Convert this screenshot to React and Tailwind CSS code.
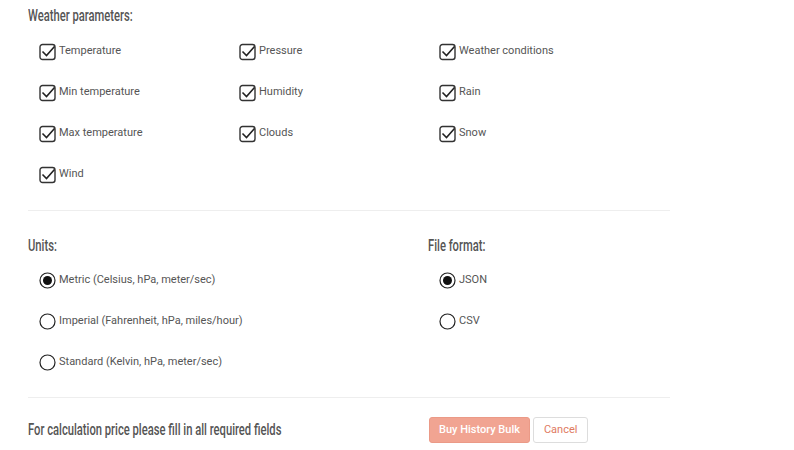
import React from "react";

const params = [
  ["Temperature", "Pressure", "Weather conditions"],
  ["Min temperature", "Humidity", "Rain"],
  ["Max temperature", "Clouds", "Snow"],
  ["Wind"],
];

function Heading({ children, className = "" }) {
  return (
    <div className={`h-[16px] leading-none whitespace-nowrap ${className}`}>
      <span className="inline-block origin-left scale-x-[0.7] text-[16px] font-medium text-[#555] leading-none">
        {children}
      </span>
    </div>
  );
}

function CheckIcon() {
  return (
    <svg width="18" height="18" viewBox="0 0 18 18" className="shrink-0">
      <rect x="1" y="1.5" width="15" height="15" rx="2.5" fill="white" stroke="#333" strokeWidth="1.4" />
      <path d="M3.5 8.5 L7.5 12.5 L15.5 3.5" fill="none" stroke="#222" strokeWidth="1.6" />
    </svg>
  );
}

function Radio({ checked }) {
  return (
    <svg width="17" height="17" viewBox="0 0 17 17" className="shrink-0">
      <circle cx="8.5" cy="8.5" r="7.5" fill="white" stroke="#222" strokeWidth="1.2" />
      {checked && <circle cx="8.5" cy="8.5" r="4.5" fill="#111" />}
    </svg>
  );
}

function Check({ label }) {
  return (
    <label className="flex items-center gap-[2px] w-[200px] h-[41px] text-[11px] text-[#555]">
      <CheckIcon />
      {label}
    </label>
  );
}

function RadioRow({ label, checked }) {
  return (
    <label className="flex items-center gap-[3px] h-[41px] text-[11px] text-[#555]">
      <Radio checked={checked} />
      {label}
    </label>
  );
}

export default function App() {
  return (
    <div className="w-[794px] h-[450px] bg-white overflow-hidden" style={{ fontFamily: "Roboto, sans-serif" }}>
      <div className="ml-[28px] w-[642px]">
        {/* Weather parameters */}
        <div className="pt-[8px]">
          <Heading>Weather parameters:</Heading>
          <div className="pl-[11px] pt-[7px]">
            {params.map((row, i) => (
              <div key={i} className="flex">
                {row.map((p) => (
                  <Check key={p} label={p} />
                ))}
              </div>
            ))}
          </div>
        </div>

        <div className="mt-[15px] border-t border-[#eee]" />

        {/* Units & file format */}
        <div className="flex pt-[27px]">
          <div className="w-[400px]">
            <Heading>Units:</Heading>
            <div className="pl-[11px] pt-[6px]">
              <RadioRow label="Metric (Celsius, hPa, meter/sec)" checked />
              <RadioRow label="Imperial (Fahrenheit, hPa, miles/hour)" />
              <RadioRow label="Standard (Kelvin, hPa, meter/sec)" />
            </div>
          </div>
          <div className="flex-1">
            <Heading>File format:</Heading>
            <div className="pl-[11px] pt-[6px]">
              <RadioRow label="JSON" checked />
              <RadioRow label="CSV" />
            </div>
          </div>
        </div>

        <div className="mt-[14px] border-t border-[#eee]" />

        {/* Footer */}
        <div className="flex items-center pt-[19px]">
          <Heading className="w-[401px]">For calculation price please fill in all required fields</Heading>
          <div className="flex gap-[3px]">
            <button className="h-[26px] px-[9px] rounded-[3px] bg-[#f1a492] border border-[#eb9a87] text-white text-[11px] font-medium">
              Buy History Bulk
            </button>
            <button className="h-[26px] px-[10px] rounded-[3px] bg-white border border-[#ddd] text-[#e07a5f] text-[11px]">
              Cancel
            </button>
          </div>
        </div>
      </div>
    </div>
  );
}
